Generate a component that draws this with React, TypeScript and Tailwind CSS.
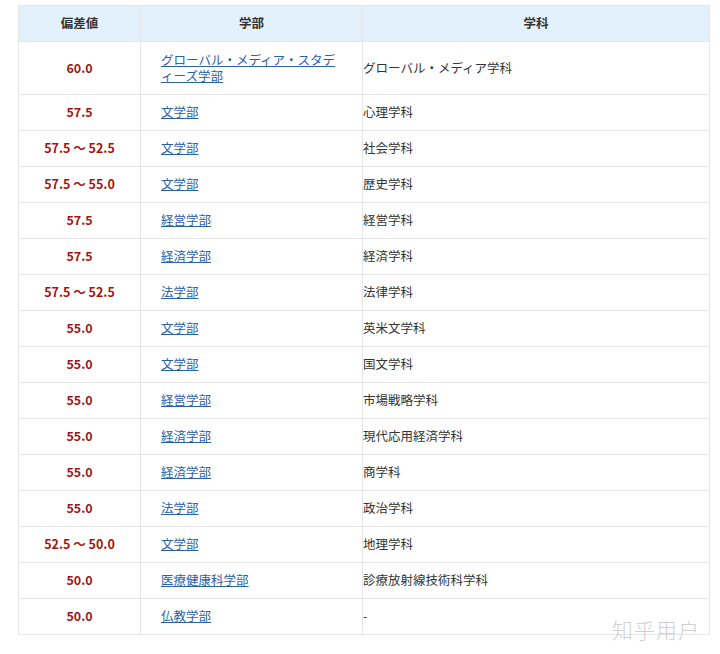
import React from "react";

const rows: [string, string, string][] = [
  ["57.5", "文学部", "心理学科"],
  ["57.5 ～ 52.5", "文学部", "社会学科"],
  ["57.5 ～ 55.0", "文学部", "歴史学科"],
  ["57.5", "経営学部", "経営学科"],
  ["57.5", "経済学部", "経済学科"],
  ["57.5 ～ 52.5", "法学部", "法律学科"],
  ["55.0", "文学部", "英米文学科"],
  ["55.0", "文学部", "国文学科"],
  ["55.0", "経営学部", "市場戦略学科"],
  ["55.0", "経済学部", "現代応用経済学科"],
  ["55.0", "経済学部", "商学科"],
  ["55.0", "法学部", "政治学科"],
  ["52.5 ～ 50.0", "文学部", "地理学科"],
  ["50.0", "医療健康科学部", "診療放射線技術科学科"],
  ["50.0", "仏教学部", "-"],
];

const font = { fontFamily: '"Noto Sans CJK JP", "Noto Sans", sans-serif' };

export default function App() {
  return (
    <div className="w-[720px] h-[654px] bg-white relative pt-[5px] pl-[18px]" style={font}>
      <table className="w-[692px] border-collapse text-[12.5px] text-[#333] table-fixed">
        <colgroup>
          <col className="w-[122px]" />
          <col className="w-[222px]" />
          <col />
        </colgroup>
        <thead>
          <tr className="h-[36px] bg-[#e3f1fc] font-bold text-[#333]">
            <th className="border border-[#e6e6e6] font-bold">偏差値</th>
            <th className="border border-[#e6e6e6] font-bold">学部</th>
            <th className="border border-[#e6e6e6] font-bold">学科</th>
          </tr>
        </thead>
        <tbody>
          <tr className="h-[53px]">
            <td className="border border-[#e6e6e6] text-center font-bold text-[#a31515]">60.0</td>
            <td className="border border-[#e6e6e6] px-[20px] leading-[16px]">
              <a className="text-[#2a62a8] underline">グローバル・メディア・スタディーズ学部</a>
            </td>
            <td className="border border-[#e6e6e6] px-0">グローバル・メディア学科</td>
          </tr>
          {rows.map((r, i) => (
            <tr key={i} className="h-[36px]">
              <td className="border border-[#e6e6e6] text-center font-bold text-[#a31515]">{r[0]}</td>
              <td className="border border-[#e6e6e6] px-[20px]">
                <a className="text-[#2a62a8] underline">{r[1]}</a>
              </td>
              <td className="border border-[#e6e6e6] px-0">{r[2]}</td>
            </tr>
          ))}
        </tbody>
      </table>
      <div className="absolute left-[612px] top-[614px] text-[21px] font-light text-[#cfcfcf] tracking-[1px]">知乎用户</div>
    </div>
  );
}
